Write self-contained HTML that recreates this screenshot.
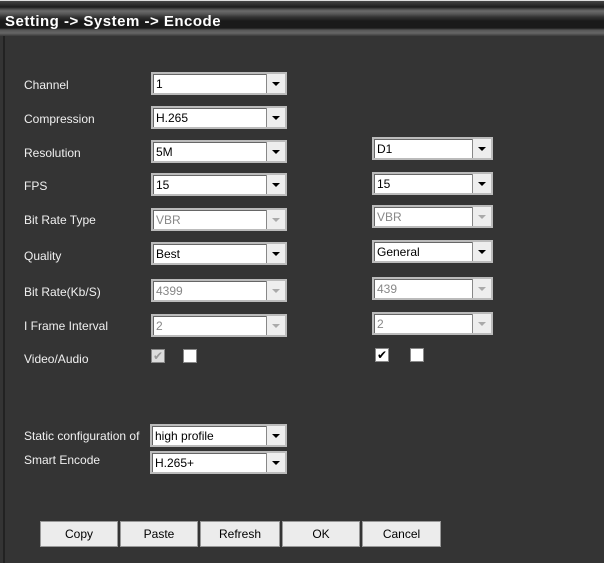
<!DOCTYPE html>
<html><head><style>
body{margin:0;width:604px;height:563px;background:#343434;position:relative;overflow:hidden;font-family:"Liberation Sans",sans-serif;font-size:12px;color:#fff}
.top{position:absolute;left:0;top:0;width:604px;height:36px;background:linear-gradient(#ddd 0,#ddd 1px,#444 1px,#2a2a2a 5px,#1c1c1c 7px,#4a4a4a 9px,#6a6a6a 11px,#555 14px,#333 17px,#1a1a1a 21px,#1a1a1a 28px,#555 30px,#666 33px,#3a3a3a 36px)}
.title{position:absolute;left:5px;top:13px;font-size:15px;font-weight:bold;color:#fff;letter-spacing:0.5px}
.lb{position:absolute;left:3px;top:36px;width:2px;height:527px;background:#222}
.lab{position:absolute;left:24px;color:#f0f0f0}
.sel{position:absolute;height:23px;background:#fff;border:2px solid #bbb;box-shadow:inset 1px 1px 0 #666;color:#000;box-sizing:border-box;padding:3px 3px;font-size:12px}
.sel::after{content:"";position:absolute;right:0;top:0;width:18px;height:19px;background:#eee;border-left:1px solid #888}
.sel i{position:absolute;right:5px;top:8px;width:0;height:0;border-left:4px solid transparent;border-right:4px solid transparent;border-top:4px solid #000;z-index:2}
.dis{color:#888}.dis i{border-top-color:#aaa}
.cb{position:absolute;width:14px;height:14px;background:#fff;border:1px solid #888;box-sizing:border-box;font-size:12px;line-height:12px;text-align:center;color:#000}
.btn{position:absolute;top:521px;height:26px;background:#ececec;border:1px solid #999;box-sizing:border-box;color:#000;text-align:center;line-height:24px;font-size:12px}
</style></head><body>
<div class="top"></div><div class="title">Setting -&gt; System -&gt; Encode</div>
<div class="lb"></div>
<div class="lab" style="top:78px">Channel</div>
<div class="lab" style="top:112px">Compression</div>
<div class="lab" style="top:146px">Resolution</div>
<div class="lab" style="top:179px">FPS</div>
<div class="lab" style="top:213px">Bit Rate Type</div>
<div class="lab" style="top:249px">Quality</div>
<div class="lab" style="top:285px">Bit Rate(Kb/S)</div>
<div class="lab" style="top:319px">I Frame Interval</div>
<div class="lab" style="top:352px">Video/Audio</div>
<div class="lab" style="top:429px">Static configuration of</div>
<div class="lab" style="top:453px">Smart Encode</div>

<div class="sel" style="left:151px;top:72px;width:136px">1<i></i></div>
<div class="sel" style="left:151px;top:106px;width:136px">H.265<i></i></div>
<div class="sel" style="left:151px;top:140px;width:136px">5M<i></i></div>
<div class="sel" style="left:151px;top:173px;width:136px">15<i></i></div>
<div class="sel dis" style="left:151px;top:208px;width:136px">VBR<i></i></div>
<div class="sel" style="left:151px;top:242px;width:136px">Best<i></i></div>
<div class="sel dis" style="left:151px;top:279px;width:136px">4399<i></i></div>
<div class="sel dis" style="left:151px;top:314px;width:136px">2<i></i></div>
<div class="cb" style="left:151px;top:349px;background:#ddd;color:#999">✔</div>
<div class="cb" style="left:183px;top:349px"></div>

<div class="sel" style="left:372px;top:137px;width:121px">D1<i></i></div>
<div class="sel" style="left:372px;top:172px;width:121px">15<i></i></div>
<div class="sel dis" style="left:372px;top:205px;width:121px">VBR<i></i></div>
<div class="sel" style="left:372px;top:240px;width:121px">General<i></i></div>
<div class="sel dis" style="left:372px;top:277px;width:121px">439<i></i></div>
<div class="sel dis" style="left:372px;top:312px;width:121px">2<i></i></div>
<div class="cb" style="left:375px;top:348px">✔</div>
<div class="cb" style="left:410px;top:348px"></div>

<div class="sel" style="left:150px;top:424px;width:137px">high profile<i></i></div>
<div class="sel" style="left:150px;top:451px;width:137px">H.265+<i></i></div>

<div class="btn" style="left:40px;width:78px">Copy</div>
<div class="btn" style="left:120px;width:78px">Paste</div>
<div class="btn" style="left:200px;width:80px">Refresh</div>
<div class="btn" style="left:282px;width:78px">OK</div>
<div class="btn" style="left:362px;width:79px">Cancel</div>
</body></html>
